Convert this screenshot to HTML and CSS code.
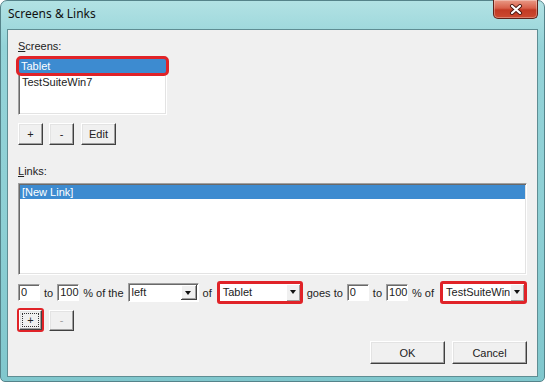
FILE: index.html
```html
<!DOCTYPE html>
<html lang="en">
<head>
    <meta charset="UTF-8">
    <title>Screens &amp; Links</title>
    <link rel="stylesheet" href="styles.css">
</head>
<body>
    <!-- Dialog window -->
    <div class="window">
        <div class="titlebar">
            <span class="title">Screens &amp; Links</span>
            <button class="close" aria-label="Close">
                <svg width="14" height="11" viewBox="0 0 14 11">
                    <path d="M3 2 L11 9 M11 2 L3 9" stroke="#4a1810" stroke-width="4" stroke-linecap="round"/>
                    <path d="M3 2 L11 9 M11 2 L3 9" stroke="#fff" stroke-width="2.2" stroke-linecap="round"/>
                </svg>
            </button>
        </div>

        <div class="client">
            <!-- Screens -->
            <div class="label"><u>S</u>creens:</div>
            <div class="listbox screens">
                <div class="item selected marked">Tablet</div>
                <div class="item">TestSuiteWin7</div>
            </div>
            <div class="btn-row">
                <button class="btn square">+</button>
                <button class="btn square">-</button>
                <button class="btn edit">Edit</button>
            </div>

            <!-- Links -->
            <div class="label links-label"><u>L</u>inks:</div>
            <div class="listbox links">
                <div class="item selected">[New Link]</div>
            </div>

            <div class="link-row">
                <span class="field">0</span>
                <span class="txt">to</span>
                <span class="field">100</span>
                <span class="txt">% of the</span>
                <span class="combo side">
                    <span class="value">left</span>
                    <span class="drop"></span>
                </span>
                <span class="txt">of</span>
                <span class="combo marked from">
                    <span class="value">Tablet</span>
                    <span class="drop"></span>
                </span>
                <span class="txt">goes to</span>
                <span class="field">0</span>
                <span class="txt">to</span>
                <span class="field">100</span>
                <span class="txt">% of</span>
                <span class="combo marked to">
                    <span class="value">TestSuiteWin</span>
                    <span class="drop"></span>
                </span>
            </div>

            <div class="btn-row second">
                <span class="mark-box"><button class="btn square focused"><span class="focus-ring">+</span></button></span>
                <button class="btn square disabled">-</button>
            </div>

            <div class="dialog-buttons">
                <button class="btn wide">OK</button>
                <button class="btn wide">Cancel</button>
            </div>
        </div>
    </div>
</body>
</html>
```

FILE: styles.css
```css
/* Global */
body {
    margin: 0;
    background-color: #fff;
    font-family: "Liberation Sans", Arial, sans-serif;
    font-size: 11px;
    color: #222;
}

/* Window frame */
.window {
    width: 545px;
    height: 382px;
    box-sizing: border-box;
    display: flex;
    flex-direction: column;
    padding: 0 6px 4px;
    border: 1px solid #55838a;
    border-radius: 7px 7px 5px 5px;
    background: linear-gradient(180deg, #b2e2e4 0%, #94d3d8 12%, #8dcfd4 60%, #80c7cd 100%);
}

.titlebar {
    height: 28px;
    display: flex;
    justify-content: space-between;
    align-items: flex-start;
}

.title {
    margin: 5px 0 0 1px;
    font-family: "Noto Sans", sans-serif;
    font-size: 12px;
    line-height: 16px;
    color: #111;
}

.close {
    width: 45px;
    height: 19px;
    margin-top: -1px;
    padding: 0;
    display: flex;
    align-items: center;
    justify-content: center;
    border: 1px solid #5e2219;
    border-top: none;
    border-radius: 0 0 5px 5px;
    background: linear-gradient(180deg, #e99a86 0%, #d8604a 45%, #c23a24 55%, #cc4a30 100%);
    box-shadow: inset 0 0 0 1px rgba(255, 255, 255, 0.3);
}

/* Client area */
.client {
    flex: 1;
    display: flex;
    flex-direction: column;
    align-items: flex-start;
    padding: 10px 10px 0;
    background-color: #f0f0f0;
    border: 1px solid #5f8d93;
}

.label {
    line-height: 13px;
    height: 13px;
}

.links-label {
    margin-top: 20px;
}

/* Listboxes */
.listbox {
    box-sizing: border-box;
    background-color: #fff;
    border-top: 1px solid #a0a0a0;
    border-left: 1px solid #a0a0a0;
    border-right: 1px solid #fff;
    border-bottom: 1px solid #fff;
    box-shadow: inset 1px 1px 0 #696969, inset -1px -1px 0 #e3e3e3;
    padding: 1px;
}

.screens {
    width: 149px;
    height: 58px;
    margin-top: 4px;
}

.links {
    width: 509px;
    height: 92px;
    margin-top: 5px;
}

.item {
    padding: 0 2px;
    line-height: 16px;
    white-space: nowrap;
}

.links .item {
    line-height: 14px;
}

.item.selected {
    background-color: #3d8bd0;
    color: #fff;
}

.item.marked {
    margin: -1px -2px 0;
    padding: 0 3px;
    outline: 3px solid #e02328;
    outline-offset: -1px;
    border-radius: 3px;
}

/* Buttons */
.btn {
    box-sizing: border-box;
    height: 22px;
    padding: 0;
    font-family: "Liberation Sans", Arial, sans-serif;
    font-size: 11px;
    color: #222;
    background-color: #f0f0f0;
    border-top: 1px solid #fff;
    border-left: 1px solid #fff;
    border-right: 1px solid #404040;
    border-bottom: 1px solid #404040;
    box-shadow: inset -1px -1px 0 #a0a0a0, inset 1px 1px 0 #e3e3e3;
    border-radius: 0;
}

.btn-row {
    display: flex;
    align-items: center;
    gap: 6px;
    margin-top: 8px;
}

.btn.square {
    width: 25px;
}

.btn.edit {
    width: 35px;
    margin-left: 1px;
}

.btn-row.second {
    margin-top: 4px;
    margin-left: -1px;
    gap: 5px;
}

.mark-box {
    display: flex;
    align-items: center;
    justify-content: center;
    width: 27px;
    height: 24px;
    box-sizing: border-box;
    border: 2px solid #e02328;
    border-radius: 3px;
}

.btn.focused {
    width: 23px;
    height: 20px;
    display: flex;
    align-items: center;
    justify-content: center;
}

.focus-ring {
    width: 15px;
    height: 12px;
    line-height: 12px;
    border: 1px dotted #333;
}

.btn.disabled {
    height: 21px;
    color: #a0a0a0;
}

.dialog-buttons {
    align-self: flex-end;
    display: flex;
    gap: 7px;
    margin-top: 9px;
}

.btn.wide {
    width: 75px;
    height: 23px;
}

/* Link row */
.link-row {
    display: flex;
    align-items: center;
    height: 23px;
    margin-top: 6px;
    gap: 4px;
}

.txt {
    white-space: nowrap;
}

.field {
    box-sizing: border-box;
    width: 22px;
    height: 17px;
    line-height: 14px;
    padding: 0 2px;
    background-color: #fff;
    border-top: 1px solid #a0a0a0;
    border-left: 1px solid #a0a0a0;
    border-right: 1px solid #fff;
    border-bottom: 1px solid #fff;
    box-shadow: inset 1px 1px 0 #696969;
}

.combo {
    box-sizing: border-box;
    display: flex;
    align-items: stretch;
    background-color: #fff;
    height: 19px;
    border-top: 1px solid #a0a0a0;
    border-left: 1px solid #a0a0a0;
    border-right: 1px solid #fff;
    border-bottom: 1px solid #fff;
    box-shadow: inset 1px 1px 0 #696969;
}

.combo .value {
    flex: 1;
    padding: 1px 3px 0;
    line-height: 15px;
    white-space: nowrap;
    overflow: hidden;
}

.combo .drop {
    flex: none;
    width: 15px;
    margin: 1px 1px 1px 0;
    background-color: #f0f0f0;
    border-right: 1px solid #404040;
    border-bottom: 1px solid #404040;
    box-shadow: inset 1px 1px 0 #fff, inset -1px -1px 0 #a0a0a0;
    position: relative;
}

.combo .drop::after {
    content: "";
    position: absolute;
    left: 4px;
    top: 6px;
    border-left: 3.5px solid transparent;
    border-right: 3.5px solid transparent;
    border-top: 4px solid #111;
}

.combo.side {
    width: 71px;
}

.combo.marked {
    height: 23px;
    border: 3px solid #e02328;
    border-radius: 3px;
    box-shadow: none;
}

.combo.marked .value {
    padding: 1px 2px 0 3px;
}

.combo.marked .drop {
    width: 14px;
    margin: 0;
    border-right: none;
    border-bottom: none;
}

.combo.from {
    width: 86px;
    margin-left: 1px;
}

.combo.to {
    width: 87px;
    margin-left: 2px;
}
```
